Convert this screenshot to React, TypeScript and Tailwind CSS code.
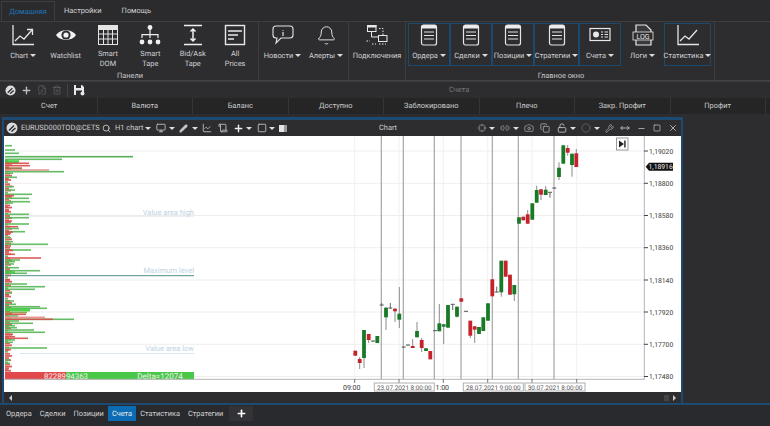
import React from 'react';
import { Bell, Camera, Circle, Copy, LockOpen, Link2, Minus, Monitor, Pencil, Plus, Scroll, Search, Square, Trash2, Wrench, X, ChartLine, MoveHorizontal, Crosshair, FilePen } from 'lucide-react';

function Caret({ color = 'border-t-[#dddddd]' }: { color?: string }) {
  return <span className={`inline-block w-0 h-0 border-x-[3px] border-t-[3px] border-x-transparent ${color}`} />;
}

const ChartIcon = ({ arrow }: { arrow?: boolean }) => (
  <svg width="24" height="22" viewBox="0 0 24 22" fill="none" stroke="#e4e4e4" strokeWidth="1.3">
    <path d="M2 1V20.5H23" />
    <path d="M4 17L9 12L13 15L21 6" />
    {arrow && <path d="M16 5.5H21.5V11" />}
  </svg>
);
const EyeIcon = () => (
  <svg width="24" height="22" viewBox="0 0 24 22">
    <path d="M2 11C6 4.5 18 4.5 22 11C18 17.5 6 17.5 2 11Z" fill="#f2f2f2" />
    <circle cx="12" cy="11" r="4.6" fill="#2d2d30" />
    <circle cx="12" cy="11" r="2.6" fill="#f2f2f2" />
  </svg>
);
const TableIcon = () => (
  <svg width="24" height="22" viewBox="0 0 24 22" fill="none" stroke="#e4e4e4" strokeWidth="1">
    <rect x="2.5" y="1.5" width="19" height="19" />
    <rect x="2.5" y="1.5" width="19" height="4" fill="#e4e4e4" />
    <path d="M2.5 10H21.5M2.5 15H21.5M7.5 5.5V20.5M12 5.5V20.5M16.5 5.5V20.5" />
  </svg>
);
const TreeIcon = () => (
  <svg width="24" height="22" viewBox="0 0 24 22" fill="#f0f0f0" stroke="none">
    <circle cx="12" cy="3.5" r="2.4" />
    <circle cx="4" cy="18" r="2.4" />
    <circle cx="12" cy="18" r="2.4" />
    <circle cx="20" cy="18" r="2.4" />
    <path d="M11.4 5H12.6V10H20.6V14H19.4V11.2H12.6V14H11.4V11.2H4.6V14H3.4V10H11.4Z" />
  </svg>
);
const BidAskIcon = () => (
  <svg width="24" height="22" viewBox="0 0 24 22" fill="none" stroke="#f0f0f0">
    <path d="M3 1.5H21M3 20.5H21" strokeWidth="1.6" />
    <path d="M12 5V17M9.5 7.5L12 5L14.5 7.5M9.5 14.5L12 17L14.5 14.5" strokeWidth="1.5" />
  </svg>
);
const PricesIcon = () => (
  <svg width="24" height="22" viewBox="0 0 24 22" fill="none" stroke="#e8e8e8">
    <rect x="2.5" y="1.5" width="19" height="19" strokeWidth="1.4" />
    <path d="M5 7H19M5 11H15M5 15H11" strokeWidth="1.6" />
  </svg>
);
const NewsIcon = () => (
  <svg width="24" height="22" viewBox="0 0 24 22" fill="none" stroke="#e4e4e4" strokeWidth="1.1">
    <path d="M5 2H19Q22 2 22 5V11Q22 14 19 14H10L5 19L6 14H5Q2 14 2 11V5Q2 2 5 2Z" />
    <path d="M12 6V6.8M12 8V12" strokeWidth="1.2" />
  </svg>
);
const NetIcon = () => (
  <svg width="24" height="22" viewBox="0 0 24 22" fill="none" stroke="#e8e8e8" strokeWidth="1">
    <rect x="2.5" y="1.5" width="8.5" height="6" />
    <rect x="13.5" y="11.5" width="8.5" height="6" />
    <path d="M6.5 7.5V13H13" />
    <path d="M14 4.5H18V11M1.5 17H5M7 20H11M14 20H21" strokeDasharray="1.5 1.5" />
    <rect x="2.5" y="1.5" width="8.5" height="1.5" fill="#e8e8e8" />
  </svg>
);
const DocIcon = () => (
  <svg width="24" height="22" viewBox="0 0 24 22" fill="none">
    <rect x="4.5" y="1" width="15" height="20" rx="2" stroke="#e4e4e4" strokeWidth="1.2" />
    <path d="M4.5 3Q4.5 1 6.5 1H17.5Q19.5 1 19.5 3V4.5H4.5Z" fill="#ececec" />
    <path d="M7 8H17M7 11.5H17M7 15H17" stroke="#e4e4e4" strokeWidth="1.2" />
  </svg>
);
const AccountIcon = () => (
  <svg width="24" height="22" viewBox="0 0 24 22" fill="none" stroke="#e8e8e8">
    <rect x="2" y="4.5" width="20" height="12" strokeWidth="1.2" />
    <circle cx="8" cy="10.5" r="3" fill="#e8e8e8" stroke="none" />
    <path d="M13 8H15M16.5 8H20M13 10.5H15M16.5 10.5H20M13 13H15M16.5 13H20" strokeWidth="1" />
  </svg>
);
const LogIcon = () => (
  <svg width="24" height="22" viewBox="0 0 24 22" fill="none">
    <path d="M5 1H15L20 6V21H5Z" stroke="#e8e8e8" strokeWidth="1.2" fill="#3a3a3d" />
    <rect x="2" y="8" width="20" height="8" fill="#2d2d30" stroke="#e8e8e8" strokeWidth="0.8" />
    <text x="12" y="14.5" textAnchor="middle" fontSize="7" fill="#e8e8e8">LOG</text>
  </svg>
);
const LogoIcon = ({ size, bg }: { size: number; bg: string }) => (
  <svg width={size} height={size} viewBox="0 0 12 12">
    <circle cx="6" cy="6" r="5.5" fill="#dcdcdc" />
    <path d="M3 8.5L8 3.5M5.5 9.5L9.5 6" stroke={bg} strokeWidth="1.4" />
  </svg>
);
const FloppyIcon = () => (
  <svg width="12" height="12" viewBox="0 0 12 12">
    <path d="M1 1H9L11 3V11H1Z" fill="#e8e8e8" />
    <rect x="3" y="1" width="5" height="3" fill="#2d2d30" />
    <rect x="3" y="6.5" width="6" height="4.5" fill="#2d2d30" />
    <circle cx="9.5" cy="9.5" r="2" fill="#e8e8e8" />
  </svg>
);

function RibbonButton({ icon, label, caret, boxed, w = 'w-[42.4px]' }: { icon: React.ReactNode; label: string; caret?: boolean; boxed?: boolean; w?: string }) {
  const twoLines = label.includes('\n');
  return (
    <div className={`${w} h-[43px] flex flex-col items-center ${boxed ? 'border border-[#1b4a70]' : 'border border-transparent'}`}>
      <div className="h-[22px] flex items-center justify-center">{icon}</div>
      <div className={`flex-1 flex items-center justify-center gap-[2px] text-center whitespace-pre-line text-[7.4px] text-[#d0d0d0] ${twoLines ? 'leading-[9.5px] mt-[3px]' : 'leading-[10px]'}`}>
        <span>{label}</span>
        {caret && <Caret />}
      </div>
    </div>
  );
}

function Ribbon() {
  return (
    <div className="h-[59px] flex bg-[#2d2d30] border-b border-[#444447]">
      <div className="w-[259px] flex flex-col pl-[2px] border-r border-[#3e3e42]">
        <div className="flex pt-[1px]">
          <RibbonButton icon={<ChartIcon arrow />} label="Chart" caret />
          <RibbonButton icon={<EyeIcon />} label="Watchlist" />
          <RibbonButton icon={<TableIcon />} label={'Smart\nDOM'} />
          <RibbonButton icon={<TreeIcon />} label={'Smart\nTape'} />
          <RibbonButton icon={<BidAskIcon />} label={'Bid/Ask\nTape'} />
          <RibbonButton icon={<PricesIcon />} label={'All\nPrices'} />
        </div>
        <div className="text-center text-[7.4px] text-[#c8c8c8] mt-[4px]">Панели</div>
      </div>
      <div className="w-[90px] flex pt-[1px] justify-center border-r border-[#3e3e42]">
        <RibbonButton icon={<NewsIcon />} label="Новости" caret w="w-[45px]" />
        <RibbonButton icon={<Bell size={21} strokeWidth={1.1} color="#e4e4e4" />} label="Алерты" caret w="w-[42px]" />
      </div>
      <div className="w-[57px] flex pt-[1px] justify-center border-r border-[#3e3e42]">
        <RibbonButton icon={<NetIcon />} label="Подключения" w="w-[56px]" />
      </div>
      <div className="w-[309px] flex flex-col pl-[2px] border-r border-[#3e3e42]">
        <div className="flex pt-[1px]">
          <RibbonButton icon={<DocIcon />} label="Ордера" caret boxed w="w-[42px]" />
          <RibbonButton icon={<DocIcon />} label="Сделки" caret boxed w="w-[42px]" />
          <RibbonButton icon={<DocIcon />} label="Позиции" caret boxed w="w-[42px]" />
          <RibbonButton icon={<DocIcon />} label="Стратегии" caret boxed w="w-[45px]" />
          <RibbonButton icon={<AccountIcon />} label="Счета" caret boxed w="w-[42px]" />
          <RibbonButton icon={<LogIcon />} label="Логи" caret w="w-[43px]" />
          <RibbonButton icon={<ChartIcon />} label="Статистика" caret boxed w="w-[47px]" />
        </div>
        <div className="text-center text-[7.4px] text-[#c8c8c8] mt-[4px]">Главное окно</div>
      </div>
    </div>
  );
}

const columns = ['Счет', 'Валюта', 'Баланс', 'Доступно', 'Заблокировано', 'Плечо', 'Закр. Профит', 'Профит'];

function AccountsPanel() {
  return (
    <>
      <div className="h-[17px] flex items-center border-t border-[#3a3a3d] bg-[#2d2d30] relative">
        <div className="flex items-center pl-[5px] gap-[5px] text-[#bbbbbb]">
          <LogoIcon size={11} bg="#2d2d30" />
          <Plus size={11} strokeWidth={3} color="#bdbdbd" />
          <FilePen size={10} color="#5d5d60" />
          <Trash2 size={10} color="#5d5d60" />
          <span className="w-px h-[13px] bg-[#444447]" />
          <FloppyIcon />
        </div>
        <span className="absolute left-[449px] text-[7.4px] text-[#77777a]">Счета</span>
      </div>
      <div className="h-[16px] flex bg-[#252526] pl-[2px]">
        {columns.map((c) => (
          <div key={c} className="w-[95.5px] flex items-center justify-center border-r border-[#363638] text-[7.4px] text-[#cccccc]">
            {c}
          </div>
        ))}
      </div>
    </>
  );
}

type Candle = [number, number, number, number, number, 'g' | 'r'];
// x, wick top, body top, body bottom, wick bottom
const candles: Candle[] = [
  [355.3, 350.7, 350.7, 355.7, 355.7, 'r'], [359.7, 357, 359, 363, 369, 'r'], [364, 330, 330, 358, 368, 'g'],
  [368.7, 334, 334, 340, 343, 'r'], [377.3, 336, 336, 343, 343, 'g'], [386, 307, 307.7, 317.3, 330, 'g'],
  [395, 308, 308.7, 311.3, 322, 'r'], [399.3, 287, 313.7, 319.7, 328, 'g'], [412.7, 339, 346, 348, 348, 'r'],
  [417, 322, 331, 337.3, 337.3, 'g'], [421.7, 338, 340, 348, 352, 'r'], [426, 348, 348.3, 351, 351, 'g'],
  [430.3, 351, 351, 359.3, 359.3, 'r'], [439.3, 304, 323.3, 331.3, 331.3, 'g'], [443.7, 324, 324.3, 326.7, 344, 'g'],
  [448, 305, 305, 327.7, 327.7, 'g'], [457, 306.7, 306.7, 316.7, 317.5, 'g'], [461.3, 298.3, 298.3, 301.7, 301.7, 'r'],
  [470.3, 320.7, 320.7, 335.7, 338, 'r'], [474.7, 326, 326.3, 329.7, 343, 'r'], [479, 327, 327, 334, 334, 'g'],
  [483.3, 317.3, 317.3, 331, 331, 'g'], [488, 303.3, 303.3, 320.7, 320.7, 'g'], [492.3, 279.3, 279.3, 296.3, 296.3, 'r'],
  [501.3, 260.7, 260.7, 292.3, 296.7, 'g'], [505.7, 260.7, 260.7, 276.7, 276.7, 'r'], [510, 274.7, 274.7, 294.7, 294.7, 'r'],
  [514.3, 285, 285, 294.3, 301, 'g'], [519, 217.3, 217.3, 223.7, 223.7, 'g'], [523.3, 216.7, 216.7, 220.3, 220.3, 'r'],
  [527.7, 210, 214.3, 223.7, 223.7, 'r'], [532.3, 203.3, 203.3, 219.7, 219.7, 'g'], [536.7, 185.7, 190, 202.7, 202.7, 'g'],
  [541, 189, 189.3, 194.7, 200, 'r'], [545.7, 186, 189.7, 195, 195, 'g'], [559, 162.3, 167.7, 177, 180, 'g'],
  [563.3, 145.3, 145.3, 163.7, 163.7, 'g'], [567.7, 145, 148, 152.7, 155.7, 'r'], [572, 153.7, 153.7, 165, 176.7, 'g'],
  [576.3, 149, 153.3, 167, 167, 'r'],
];
// x, y, wick top, wick bottom
const dojis: [number, number, number, number][] = [
  [373, 341, 341, 342], [381.7, 305, 303, 306], [390.3, 308, 303, 309], [403.7, 347, 347, 348], [408, 345, 345, 346],
  [435, 330.7, 330, 331], [452.7, 304.3, 304, 310], [466, 311.3, 311, 312], [496.7, 292, 286.7, 292.5], [550, 192.3, 192, 197.7],
  [554.3, 188, 188, 189],
];
const prices: [string, number][] = [
  ['1,19020', 151], ['1,18800', 183.3], ['1,18580', 215.5], ['1,18360', 247.7], ['1,18140', 280], ['1,17920', 312], ['1,17700', 344.3], ['1,17480', 376.5],
];
const darkLines = [381.3, 403.3, 434.3, 461, 492.3, 518.3, 554];
const lightLines = [354.7, 399, 443.3, 487.7, 532, 576.7];
const G = '#58b858', B = '#3ed03e', R = '#d8504c', P = '#e58f8a';
// y, length, colour, height
const profile: [number, number, string, number][] = [
  [145.7, 7, G, 1.6], [150, 10, G, 1.6], [153.3, 14, G, 1.6], [156.7, 128, '#4aa84a', 1.6], [159.3, 57, G, 1.6], [161.7, 14, B, 3], [163.3, 24, R, 1.6],
  [165.7, 25, R, 1.6], [168.3, 17, '#a0703c', 2], [170, 44, P, 1.6], [171.7, 59, G, 1.6], [173.3, 8, G, 1.6], [177.3, 12, G, 1.6], [179, 3, R, 1.6],
  [186.7, 9, G, 1.6], [190, 10, G, 1.6], [194.3, 27, G, 1.6], [195.7, 9, R, 1.6], [198.3, 24, G, 1.6], [201.7, 25, G, 1.6], [203, 8, G, 1.6],
  [207, 3, R, 1.6], [211, 4, R, 1.6], [214.3, 24, G, 1.6], [217.7, 24, G, 1.6], [221, 7, R, 1.6], [224, 24, G, 1.6], [226.7, 13, R, 1.6], [228.5, 14, G, 1.6],
  [231.7, 20, G, 1.6], [232, 8, R, 1.6], [234.3, 5, R, 1.6], [237.7, 6, G, 1.6], [241.7, 8, G, 1.6], [244.3, 43, G, 1.6], [246, 6, R, 1.6], [250, 26, G, 1.6],
  [250.5, 8, R, 1.6], [254.3, 10, R, 1.6], [258, 36, R, 1.6], [260, 15, G, 1.6], [261.7, 10, G, 1.6], [264, 9, G, 1.6], [267.7, 14, G, 1.6], [270.7, 35, G, 1.6],
  [272.5, 10, B, 2.5], [273.3, 22, G, 1.6], [280, 5, R, 1.6], [284, 22, G, 1.6], [286.7, 40, G, 1.6], [289.3, 30, G, 1.6], [293, 7, G, 1.6], [295, 4, R, 1.6],
  [301, 9, G, 1.6], [304.3, 11, G, 1.6], [306.7, 35, G, 1.6], [308.3, 42, G, 1.6], [310, 25, B, 3], [312.5, 22, '#8f9a44', 1.6], [314.3, 21, R, 1.6], [316, 13, G, 1.6],
  [317.3, 40, P, 1.6], [319.3, 69, G, 1.6], [319.3, 48, R, 1.6], [321, 14, G, 1.6], [323.3, 28, G, 1.6], [325.7, 10, G, 1.6], [327.7, 12, G, 1.6], [330, 29, G, 1.6],
  [332.3, 40, G, 1.6], [334.3, 8, R, 1.6], [336.7, 10, R, 1.6], [338.3, 23, R, 1.6], [340, 10, G, 1.6], [342.3, 8, G, 1.6], [348, 42, G, 1.6], [350, 4, R, 1.6],
  [360, 5, G, 1.6], [363.3, 5, G, 1.6], [366.7, 4, R, 1.6], [370, 3, R, 1.6],
];
const baseRows = Array.from({ length: 100 }, (_, i) => i);

function ChartCanvas() {
  return (
    <svg width="676.5" height="256" viewBox="4 136 676.5 256" className="block bg-white">
      {prices.map(([, y]) => <line key={y} x1="4" x2="644" y1={y} y2={y} stroke="#eeeeee" />)}
      {lightLines.map((x) => <line key={x} x1={x} x2={x} y1="136" y2="379" stroke="#f0f0f0" />)}
      {darkLines.map((x) => <line key={x} x1={x} x2={x} y1="136" y2="379" stroke="#a5a5a5" strokeWidth="1.2" />)}

      {baseRows.map((i) => (
        <rect key={i} x="5" y={160 + i * 2.12} width={3 + ((i * 7) % 5)} height="1.8" fill={i % 5 === 0 ? G : R} opacity="0.9" />
      ))}
      {profile.map(([y, l, c, h], i) => (
        <rect key={i} x="5" y={y - h / 2} width={l} height={h} fill={c} opacity="0.92" />
      ))}

      <line x1="24" x2="194" y1="216" y2="216" stroke="#e6ebf2" strokeWidth="1.5" />
      <line x1="5" x2="194" y1="275.7" y2="275.7" stroke="#4f8f85" />
      <line x1="20" x2="194" y1="353.5" y2="353.5" stroke="#dbe5ee" />
      <text x="194" y="215" textAnchor="end" fontSize="7.5" fill="#bfd3df">Value area high</text>
      <text x="194" y="273" textAnchor="end" fontSize="7.5" fill="#bfd3df">Maximum level</text>
      <text x="194" y="351" textAnchor="end" fontSize="7.5" fill="#bfd3df">Value area low</text>

      <rect x="5" y="372" width="61" height="7.5" fill="#e2494b" />
      <rect x="66" y="372" width="128" height="7.5" fill="#48c748" />
      <text x="66" y="378.8" textAnchor="middle" fontSize="7.8" fill="#f3f3f3">8228994363</text>
      <text x="160" y="378.8" textAnchor="middle" fontSize="8" fill="#f3f3f3">Delta=12074</text>

      {candles.map(([x, wt, bt, bb, wb, c], i) => (
        <g key={i}>
          <line x1={x} x2={x} y1={wt} y2={wb} stroke="#8a8a8a" />
          <rect x={x - 1.9} y={bt} width="3.8" height={bb - bt} fill={c === 'g' ? '#187a26' : '#c5232b'} />
        </g>
      ))}
      {dojis.map(([x, y, t, b]) => (
        <g key={x}>
          <line x1={x - 2} x2={x + 2} y1={y} y2={y} stroke="#555555" />
          <line x1={x} x2={x} y1={t} y2={b} stroke="#666666" />
        </g>
      ))}

      <line x1="4" x2="644.5" y1="379.3" y2="379.3" stroke="#b5b5b5" />
      <line x1="644.3" x2="644.3" y1="136" y2="379.5" stroke="#b5b5b5" />
      {prices.map(([p, y]) => (
        <g key={p}>
          <line x1="644" x2="648" y1={y} y2={y} stroke="#444444" />
          <text x="649" y={y + 2.7} fontSize="6.8" fill="#3c3c3c">{p}</text>
        </g>
      ))}
      {lightLines.map((x) => <line key={x} x1={x} x2={x} y1="379" y2="383" stroke="#777777" />)}
      <text x="343" y="389.5" fontSize="7" fill="#333333">09:00</text>
      <text x="435.5" y="389.5" fontSize="7" fill="#333333">1:00</text>
      {[[374.3, '23.07.2021 8:00:00'], [463.3, '28.07.2021 9:00:00'], [525, '30.07.2021 8:00:00']].map(([x, t]) => (
        <g key={t as string}>
          <rect x={x as number} y="383" width="60" height="8" fill="#ffffff" stroke="#b0b0b0" />
          <text x={(x as number) + 30} y="389.5" textAnchor="middle" fontSize="6.4" fill="#555555">{t}</text>
        </g>
      ))}

      <rect x="616.5" y="138" width="11.5" height="12" fill="#ffffff" stroke="#999999" />
      <path d="M619 140.5L624 144L619 147.5Z M624.2 140.5H625.6V147.5H624.2Z" fill="#222222" />
      <path d="M645.7 166.7L649 162.7H673V170.7H649Z" fill="#111111" />
      <text x="648.5" y="169.4" fontSize="6.8" fill="#f2f2f2">1,18916</text>
    </svg>
  );
}

function ChartTitleBar() {
  const c = '#c8c8c8';
  return (
    <div className="h-[16px] flex items-center bg-[#2d2d30] relative text-[7.4px] text-[#cfcfcf] whitespace-nowrap">
      <span className="ml-[2px] flex"><LogoIcon size={12} bg="#2d2d30" /></span>
      <span className="ml-[3px] w-[80px]">EURUSD000TOD@CETS</span>
      <Search size={9} color={c} strokeWidth={2.4} className="ml-[1px]" />
      <span className="ml-[4px] w-[30px]">H1 chart</span>
      <span className="flex"><Caret /></span>
      <Monitor size={10} color={c} className="ml-[5px]" />
      <span className="ml-[3px] flex"><Caret /></span>
      <Pencil size={9} color={c} fill={c} className="ml-[4px]" />
      <span className="ml-[4px] flex"><Caret /></span>
      <ChartLine size={10} color={c} className="ml-[4px]" />
      <Scroll size={10} color={c} className="ml-[6px]" />
      <Plus size={11} color="#eeeeee" strokeWidth={3} className="ml-[5px]" />
      <span className="ml-[2px] flex"><Caret /></span>
      <Square size={10} color={c} className="ml-[5px]" />
      <span className="ml-[2px] flex"><Caret /></span>
      <div className="ml-[4px] w-[8px] h-[7px] bg-[#e4e4e4] border-r-[3px] border-[#9a9a9a]" />
      <span className="absolute left-[375px]">Chart</span>

      <div className="absolute right-[3px] flex items-center gap-[3px]">
        <Crosshair size={8} color="#9a9a9a" />
        <Caret />
        <Link2 size={10} color="#9a9a9a" className="ml-[2px]" />
        <Caret />
        <Camera size={10} color="#9a9a9a" className="ml-[2px]" />
        <Copy size={10} color="#a8a8a8" className="ml-[3px]" />
        <LockOpen size={10} color={c} className="ml-[4px]" />
        <Caret />
        <Circle size={10} color="#666666" className="ml-[2px]" />
        <Caret />
        <Wrench size={9} color="#a8a8a8" className="ml-[2px]" />
        <MoveHorizontal size={10} color={c} className="ml-[3px]" />
        <Minus size={9} color={c} className="ml-[4px]" />
        <Square size={8} color={c} className="ml-[4px]" />
        <X size={10} color={c} className="ml-[4px]" />
      </div>
    </div>
  );
}

const bottomTabs = ['Ордера', 'Сделки', 'Позиции', 'Счета', 'Статистика', 'Стратегии'];

export default function App() {
  return (
    <div className="w-[770px] h-[426px] overflow-hidden bg-[#2d2d30] flex flex-col font-['Roboto',sans-serif] [text-rendering:geometricPrecision]">
      <div className="h-[22px] flex items-end bg-[#2b2b2d] border-b border-[#3e3e42] text-[7.4px]">
        <div className="w-[54px] h-[20px] ml-[1px] flex items-center justify-center border-x border-t border-[#3e3e42] text-[#1f73b8]">Домашняя</div>
        <div className="h-[20px] ml-[9px] flex items-center text-[#d0d0d0]">Настройки</div>
        <div className="h-[20px] ml-[20px] flex items-center text-[#d0d0d0]">Помощь</div>
      </div>
      <Ribbon />
      <AccountsPanel />
      <div className="h-[3px]" />

      <div className="ml-[2px] w-[681px] h-[286px] border-t-[3px] border-x-2 border-[#1c4a72] flex flex-col">
        <ChartTitleBar />
        <ChartCanvas />
        <div className="flex-1 flex items-center bg-[#2d2d30] relative">
          <span className="ml-[5px] w-0 h-0 border-y-[3px] border-r-[3px] border-y-transparent border-r-[#cccccc]" />
          <span className="absolute left-[660px] w-[5px] h-[6px] bg-[#444447]" />
          <span className="absolute left-[669px] w-0 h-0 border-y-[3px] border-l-[3px] border-y-transparent border-l-[#cccccc]" />
        </div>
      </div>
      <div className="h-[2px] bg-[#1c4a72]" />

      <div className="flex-1 flex items-start pl-[2px] pt-[1px] bg-[#292a2e] text-[7.4px] text-[#d0d0d0]">
        {bottomTabs.map((t) => (
          <div key={t} className={`h-[15px] px-[4px] flex items-center ${t === 'Счета' ? 'bg-[#0b6cb4] text-[#e8e8e8]' : ''}`}>
            {t}
          </div>
        ))}
        <div className="ml-[2px] w-[24px] h-[15px] flex items-center justify-center bg-[#333337]">
          <Plus size={11} color="#ffffff" strokeWidth={3.5} />
        </div>
      </div>
    </div>
  );
}
